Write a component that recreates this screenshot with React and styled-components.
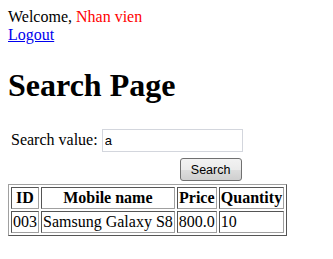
import React, { useState } from "react";
import styled, { createGlobalStyle } from "styled-components";

const GlobalStyle = createGlobalStyle`
  body {
    margin: 8px;
    background: #fff;
    color: #000;
    font-family: "Liberation Serif", "Times New Roman", serif;
    font-size: 16px;
  }
`;

const Greeting = styled.div`
  line-height: 18px;
`;

const UserName = styled.span`
  color: red;
`;

const LogoutLink = styled.a`
  display: block;
  color: #0000ee;
  text-decoration: underline;
  line-height: 18px;
  cursor: pointer;
`;

const Title = styled.h1`
  font-size: 32px;
  font-weight: bold;
  margin: 23px 0 20px;
  line-height: 37px;
`;

const SearchForm = styled.form`
  margin: 0;
`;

const FormTable = styled.table`
  border-spacing: 2px;
  td {
    padding: 1px;
    vertical-align: middle;
  }
`;

const LabelCell = styled.td`
  white-space: nowrap;
`;

const ActionCell = styled.td`
  text-align: right;
`;

const TextInput = styled.input`
  box-sizing: border-box;
  width: 141px;
  height: 23px;
  margin: 2px 0 0;
  padding: 1px 2px;
  border: 1px solid #d3d6dd;
  font-family: "Liberation Sans", Arial, sans-serif;
  font-size: 13px;
  color: #000;
  outline: none;
`;

const SearchButton = styled.button`
  box-sizing: border-box;
  width: 62px;
  height: 23px;
  margin: 2px 1px 0 0;
  padding: 0 6px;
  border: 1px solid #707070;
  border-radius: 3px;
  background: linear-gradient(#f2f2f2 0%, #ebebeb 50%, #dddddd 51%, #cfcfcf 100%);
  font-family: "Liberation Sans", Arial, sans-serif;
  font-size: 12.5px;
  color: #000;
`;

const ResultTable = styled.table`
  border: 1px solid;
  border-color: #a0a0a0 #555 #555 #a0a0a0;
  border-spacing: 2px;
`;

const HeadCell = styled.th`
  border: 1px solid;
  border-color: #555 #a0a0a0 #a0a0a0 #555;
  padding: 1px;
  font-weight: bold;
  text-align: center;
  line-height: 18px;
`;

const Cell = styled.td`
  border: 1px solid;
  border-color: #555 #a0a0a0 #a0a0a0 #555;
  padding: 1px;
  line-height: 18px;
`;

const phones = [
  { id: "003", name: "Samsung Galaxy S8", price: "800.0", quantity: 10 },
];

export default function App() {
  const [value, setValue] = useState("a");

  return (
    <>
      <GlobalStyle />
      <Greeting>
        Welcome, <UserName>Nhan vien</UserName>
      </Greeting>
      <LogoutLink>Logout</LogoutLink>
      <Title>Search Page</Title>
      <SearchForm onSubmit={(e) => e.preventDefault()}>
        <FormTable>
          <tbody>
            <tr>
              <LabelCell>Search value:</LabelCell>
              <td>
                <TextInput value={value} onChange={(e) => setValue(e.target.value)} />
              </td>
            </tr>
            <tr>
              <td></td>
              <ActionCell>
                <SearchButton type="submit">Search</SearchButton>
              </ActionCell>
            </tr>
          </tbody>
        </FormTable>
      </SearchForm>
      <ResultTable>
        <tbody>
          <tr>
            <HeadCell>ID</HeadCell>
            <HeadCell>Mobile name</HeadCell>
            <HeadCell>Price</HeadCell>
            <HeadCell>Quantity</HeadCell>
          </tr>
          {phones.map((p) => (
            <tr key={p.id}>
              <Cell>{p.id}</Cell>
              <Cell>{p.name}</Cell>
              <Cell>{p.price}</Cell>
              <Cell>{p.quantity}</Cell>
            </tr>
          ))}
        </tbody>
      </ResultTable>
    </>
  );
}
